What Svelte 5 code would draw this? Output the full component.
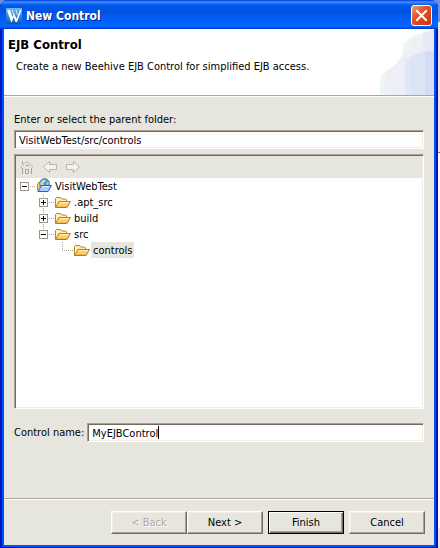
<script lang="ts">
	type TreeNode = { name: string; icon: 'project' | 'folder'; open?: boolean; children?: TreeNode[] };

	let folder = $state('VisitWebTest/src/controls');
	let controlName = $state('MyEJBControl');
	let selected = $state('controls');

	let tree: TreeNode[] = $state([
		{
			name: 'VisitWebTest', icon: 'project', open: true,
			children: [
				{ name: '.apt_src', icon: 'folder', open: false, children: [] },
				{ name: 'build', icon: 'folder', open: false, children: [] },
				{
					name: 'src', icon: 'folder', open: true,
					children: [{ name: 'controls', icon: 'folder' }]
				}
			]
		}
	]);
</script>

{#snippet folderIcon()}
	<svg width="16" height="16" viewBox="0 0 16 16">
		<path d="M.5 13.5V4.500l1-1h4l1 1.500h4l1 1v7.500z" fill="#ffe9a0" stroke="#bd8126" />
		<path d="M1.500 13V5h4l1 1.500h4" fill="none" stroke="#fff3c4" />
		<path d="M.5 13.500l3.500-6h11.500l-3.500 6z" fill="#fcd06e" stroke="#b77924" />
		<path d="M4.600 8.500h9.200" stroke="#fff0b8" />
		<path d="M2.500 12.500h9" stroke="#f4b24c" />
	</svg>
{/snippet}

{#snippet projectIcon()}
	<svg width="16" height="16" viewBox="0 0 16 16">
		<path d="M1.500 12.500V5.500l1-1h4v8z" fill="#ffd978" stroke="#b98a3a" />
		<circle cx="8.500" cy="5.500" r="4.800" fill="#5d97bd" stroke="#416c93" />
		<path d="M5 3.500l2-2 3 .5-1 2-2 1 1 2-2 1-2-2zM10.500 4.500l2-.5.3 2-1.800 1.500z" fill="#b7dbd2" />
		<path d="M2 13.500L5.500 7.500h10l-3.500 6z" fill="#a9cbff" stroke="#245fc9" />
		<path d="M6 8.500h7.500" stroke="#e1eeff" />
		<path d="M2.500 7l2 2-2 2z" fill="#f2b33d" />
	</svg>
{/snippet}

{#snippet branch(nodes: TreeNode[])}
	<ul>
		{#each nodes as node}
			<li>
				<div class="row">
					<span class="slot">
						{#if node.children}
							<button
								class="toggle"
								class:collapsed={!node.open}
								type="button"
								aria-label="{node.open ? 'Collapse' : 'Expand'} {node.name}"
								onclick={() => (node.open = !node.open)}
							></button>
						{/if}
					</span>
					{#if node.icon === 'project'}{@render projectIcon()}{:else}{@render folderIcon()}{/if}
					<button
						class="node"
						class:selected={selected === node.name}
						type="button"
						onclick={() => (selected = node.name)}
					>{node.name}</button>
				</div>
				{#if node.open && node.children?.length}
					{@render branch(node.children)}
				{/if}
			</li>
		{/each}
	</ul>
{/snippet}

<div class="desktop">
	<section class="window">
		<header class="titlebar">
			<svg width="16" height="16" viewBox="0 0 16 16">
				<defs>
					<linearGradient id="logo" x1="0" y1="0" x2="0" y2="1">
						<stop offset="0" stop-color="#6abdf0" />
						<stop offset="1" stop-color="#0757ae" />
					</linearGradient>
				</defs>
				<rect width="16" height="16" rx="1" fill="url(#logo)" />
				<path d="M1 2h3l2.500 7L8 5l2.500 6L14 2h1.500L11 14H9.500L7.500 9 6 14H5z" fill="#fff" />
				<path d="M6 2l3 8M10 2l1.500 5" stroke="#d6eeff" />
			</svg>
			<h1>New Control</h1>
			<button class="close" type="button" aria-label="Close">
				<svg width="17" height="17" viewBox="0 0 17 17">
					<path d="M4 4l9 9M13 4l-9 9" stroke="#fff" stroke-width="2" stroke-linecap="square" />
				</svg>
			</button>
		</header>

		<div class="body">
			<div class="banner">
				<div class="intro">
					<h2>EJB Control</h2>
					<p>Create a new Beehive EJB Control for simplified EJB access.</p>
				</div>
				<svg width="54" height="66" viewBox="0 0 54 66">
					<path d="M0 66V48l8-8V66z" fill="#eef6f4" />
					<path d="M23 31V15Q36 3 54 1V30z" fill="#eef5f5" />
					<path d="M5 66V46l4-6 8-6 6-9 6-9Q40 4 54 1V66z" fill="#efeff8" />
					<path d="M43 4L54 1V66H43z" fill="#e8e8f6" />
					<path d="M25 66V31Q38 22 54 22V66z" fill="#e2e6f6" />
					<path d="M30 66V28Q42 22 54 22V66z" fill="#dce5f6" />
					<path d="M45 66V23l9-1V66z" fill="#d2dcf5" />
				</svg>
			</div>

			<form class="page" onsubmit={(e) => e.preventDefault()}>
				<label for="parent">Enter or select the parent folder:</label>
				<input id="parent" class="sunken" type="text" bind:value={folder} />

				<div class="tree sunken">
					<div class="toolbar">
						<button type="button" aria-label="Home">
							<svg width="16" height="16" viewBox="0 0 16 16">
								<path d="M1.500 8.500L8 2.500l6.500 6" fill="none" stroke="#aaa294" stroke-dasharray="2 1" />
								<path d="M3.500 5V2M3.500 9v6M12.500 9v6M7 6.500h3M6.500 10.500h3v4h-3z" fill="none" stroke="#aaa294" />
							</svg>
						</button>
						<button type="button" aria-label="Back">
							<svg width="16" height="16" viewBox="0 0 16 16">
								<path d="M1.500 8l6-5.500v3h7v5h-7v3z" fill="#f4f3ee" stroke="#b9b5ab" />
							</svg>
						</button>
						<button type="button" aria-label="Forward">
							<svg width="16" height="16" viewBox="0 0 16 16">
								<path d="M14.500 8l-6-5.500v3h-7v5h7v3z" fill="#f4f3ee" stroke="#b9b5ab" />
							</svg>
						</button>
					</div>
					<div class="nodes">
						{@render branch(tree)}
					</div>
				</div>

				<div class="field">
					<label for="name">Control name:</label>
					<div class="caret-box">
						<!-- svelte-ignore a11y_autofocus -->
						<input id="name" class="sunken" type="text" bind:value={controlName} autofocus />
						<span class="caret" aria-hidden="true">{controlName}</span>
					</div>
				</div>
			</form>

			<footer>
				<div class="pair">
					<button class="push" type="button" disabled>&lt; Back</button>
					<button class="push" type="button">Next &gt;</button>
				</div>
				<button class="push default" type="button">Finish</button>
				<button class="push" type="button">Cancel</button>
			</footer>
		</div>
	</section>
</div>

<style>
	:global(body) { margin: 0; background: #e6e6de; }
	:global(*) { box-sizing: border-box; }

	.desktop {
		display: flex; min-height: 100vh; padding-right: 2px;
		background: linear-gradient(#7090e0 22px, #e6e6de 22px 152px, #736b63 152px 153px, #fff 153px calc(100% - 20px), #e6e6de calc(100% - 20px));
		font: 11px/14px "DejaVu Sans Condensed", "DejaVu Sans", sans-serif;
		color: #000;
	}
	button, input { font: inherit; color: inherit; }
	button { padding: 0; border: 0; background: none; }
	svg { display: block; flex: none; }
	ul { list-style: none; margin: 0; padding: 0; }

	.window {
		flex: 1; display: flex; flex-direction: column;
		background: linear-gradient(90deg, #0016c4 2px, #0050f8 2px calc(100% - 2px), #0016a8 calc(100% - 2px));
		border-bottom: 1px solid #0016b4;
		border-radius: 7px 7px 0 0;
		overflow: hidden;
	}

	.titlebar {
		display: flex; align-items: center; gap: 4px;
		height: 29px; padding: 2px 6px 0;
		background: linear-gradient(#0831d9 0, #3a94ff 2px, #0058ee 5px, #0053e1 12px, #0060fa 20px, #0066ff 27px, #003dd7 28px);
	}
	h1 {
		flex: 1; margin: 0;
		font: bold 12px/16px "DejaVu Sans Condensed", "DejaVu Sans", sans-serif;
		color: #fff; text-shadow: 1px 1px #0a1883;
	}
	.close {
		display: grid; place-items: center;
		width: 21px; height: 21px;
		border: 1px solid #fff; border-radius: 3px;
		background: linear-gradient(135deg, #f09a80, #e2522b 40%, #c8380c);
	}

	.body {
		flex: 1; display: flex; flex-direction: column;
		margin: 0 4px 2px;
		background: #e6e6de;
	}

	.banner {
		display: flex; justify-content: space-between;
		background: #fff;
		border-bottom: 1px solid #aca899;
		box-shadow: 0 1px #fff;
	}
	.intro { padding: 9px 0 0 4px; }
	h2 {
		margin: 0;
		font: bold 13px/14px "DejaVu Sans Condensed", "DejaVu Sans", sans-serif;
	}
	p { margin: 8px 0 0 8px; }

	.page {
		flex: 1; display: flex; flex-direction: column;
		padding: 17px 10px 56px;
	}
	.sunken {
		border: 1px solid; border-color: #aca093 #fff #fff #aca093;
		box-shadow: inset 1px 1px #736b63, inset -1px -1px #f4ece6;
		border-radius: 0;
	}
	input {
		width: 100%; height: 19px; padding: 2px 4px 0;
		background: #fff; outline: 0;
	}
	#parent { margin-top: 3px; }

	.tree { flex: 1; margin-top: 5px; padding: 1px; min-height: 120px; }
	.toolbar {
		display: flex; align-items: center; gap: 7px;
		height: 22px; padding-left: 3px;
	}
	.nodes { height: calc(100% - 22px); padding-left: 1px; background: #fff; }
	.row { display: flex; align-items: center; height: 16px; }
	ul ul { padding-left: 19px; }

	/* dotted connectors: the horizontal one for every row, the vertical one below the root */
	.slot {
		display: flex; align-items: center;
		width: 19px; height: 16px; padding-left: 3px;
		background: repeating-linear-gradient(90deg, #aca899 0 1px, transparent 1px 2px) 7px 8px / 12px 1px no-repeat;
	}
	ul ul > li > .row > .slot {
		background:
			repeating-linear-gradient(90deg, #aca899 0 1px, transparent 1px 2px) 7px 8px / 12px 1px no-repeat,
			repeating-linear-gradient(#aca899 0 1px, transparent 1px 2px) 7px 0 / 1px 16px no-repeat;
	}
	ul ul > li:last-child > .row > .slot {
		background-size: 12px 1px, 1px 8px;
	}
	.toggle {
		width: 9px; height: 9px;
		border: 1px solid #9c9484;
		background: linear-gradient(#000, #000) center / 5px 1px no-repeat, #fff;
	}
	.toggle.collapsed {
		background:
			linear-gradient(#000, #000) center / 5px 1px no-repeat,
			linear-gradient(#000, #000) center / 1px 5px no-repeat,
			#fff;
	}
	.node { height: 16px; margin-left: 1px; padding: 2px 2px 0; line-height: 14px; }
	.node.selected { background: #e6e6de; }

	.field { display: flex; align-items: center; gap: 3px; margin-top: 14px; }
	.field label { flex: none; }
	.caret-box { position: relative; flex: 1; }
	.caret-box input { display: block; caret-color: transparent; }
	.caret {
		position: absolute; left: 5px; top: 3px;
		height: 13px; border-right: 1px solid #000;
		color: transparent; pointer-events: none; white-space: pre;
	}

	footer {
		display: flex; justify-content: flex-end; gap: 5px;
		padding: 12px 9px 11px 0;
		border-top: 1px solid #aca899;
		box-shadow: inset 0 1px #fff;
	}
	.pair { display: flex; }
	.push {
		width: 76px; height: 23px;
		background: #e6e6de;
		border: 1px solid; border-color: #fff #736b63 #736b63 #fff;
		box-shadow: inset -1px -1px #aca093, inset 1px 1px #f4ece6;
	}
	.push.default {
		border-color: #000;
		box-shadow: inset 1px 1px #fff, inset -1px -1px #736b63, inset -2px -2px #aca093;
	}
	.push:disabled { color: #aca899; text-shadow: 1px 1px #fff; }
</style>
